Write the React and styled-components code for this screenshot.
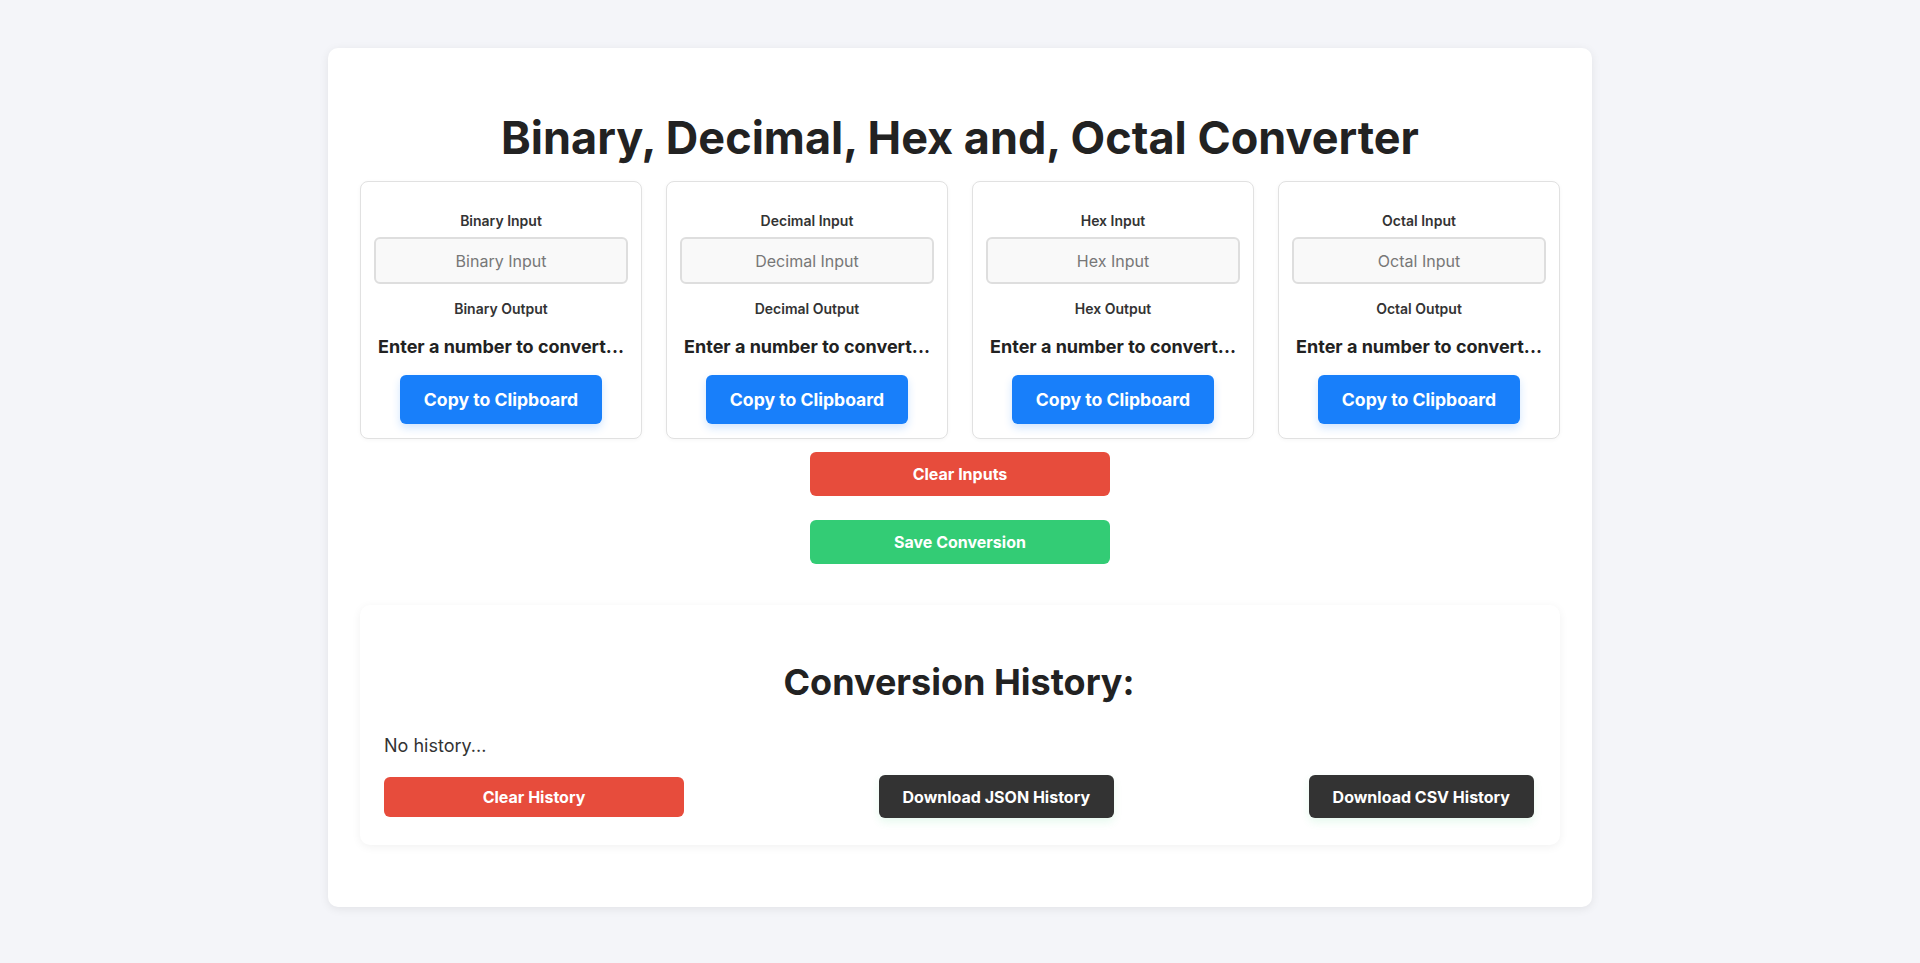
import React, { useState } from "react";
import styled, { createGlobalStyle } from "styled-components";

const GlobalStyle = createGlobalStyle`
    html, body {
        margin: 0;
        padding: 0;
        background: #f4f5f9;
        font-family: Inter, "Noto Sans", sans-serif;
        color: #222;
    }
`;

const BASES = [
    { key: "binary", title: "Binary" },
    { key: "decimal", title: "Decimal" },
    { key: "hex", title: "Hex" },
    { key: "octal", title: "Octal" },
];

const Page = styled.div`
    padding: 48px 0 57px;
`;

const Main = styled.div`
    width: 1264px;
    margin: 0 auto;
    box-sizing: border-box;
    background: #fff;
    border-radius: 10px;
    box-shadow: 0 2px 10px rgba(0, 0, 0, 0.08);
    padding: 63px 32px 62px;
`;

const Title = styled.h1`
    margin: 0 0 17px;
    text-align: center;
    font-size: 45px;
    line-height: 53px;
    font-weight: 700;
    color: #222;
`;

const Grid = styled.div`
    display: grid;
    grid-template-columns: repeat(4, 1fr);
    gap: 24px;
`;

const Card = styled.div`
    display: flex;
    flex-direction: column;
    align-items: center;
    background: #fff;
    border: 1px solid #e1e1e1;
    border-radius: 8px;
    box-shadow: 0 1px 4px rgba(0, 0, 0, 0.04);
    padding: 30px 13px 14px;
    min-width: 0;
`;

const Label = styled.label`
    font-size: 14px;
    line-height: 17px;
    font-weight: 600;
    color: #333;
    margin-top: ${(p) => (p.$spaced ? "16px" : "0")};
`;

const Input = styled.input`
    box-sizing: border-box;
    width: 100%;
    height: 47px;
    margin-top: 8px;
    border: 2px solid #dedede;
    border-radius: 6px;
    background: #f9f9f9;
    font-family: Inter, "Noto Sans", sans-serif;
    font-size: 16px;
    text-align: center;
    color: #333;
    outline: none;

    &::placeholder {
        color: #777;
    }
`;

const Output = styled.div`
    width: 100%;
    margin-top: 19px;
    font-size: 18px;
    line-height: 22px;
    font-weight: 700;
    color: #222;
    text-align: center;
    white-space: nowrap;
    overflow: hidden;
    text-overflow: ellipsis;
`;

const CopyButton = styled.button`
    margin-top: 17px;
    height: 49px;
    padding: 0 24px;
    border: none;
    border-radius: 6px;
    background: #187ffa;
    color: #fff;
    font-family: Inter, "Noto Sans", sans-serif;
    font-size: 17.6px;
    font-weight: 700;
    box-shadow: 0 4px 8px rgba(24, 127, 250, 0.2);
    cursor: pointer;
`;

const Actions = styled.div`
    display: flex;
    flex-direction: column;
    align-items: center;
    gap: 24px;
    margin-top: 13px;
`;

const WideButton = styled.button`
    width: 300px;
    height: 44px;
    border: none;
    border-radius: 6px;
    background: ${(p) => p.$color};
    color: #fff;
    font-family: Inter, "Noto Sans", sans-serif;
    font-size: 16px;
    font-weight: 700;
    cursor: pointer;
`;

const History = styled.div`
    margin-top: 41px;
    background: #fff;
    border-radius: 10px;
    box-shadow: 0 2px 10px rgba(0, 0, 0, 0.06);
    padding: 55px 26px 27px 24px;
`;

const HistoryTitle = styled.h2`
    margin: 0;
    text-align: center;
    font-size: 36px;
    line-height: 44px;
    font-weight: 700;
    color: #222;
`;

const Empty = styled.p`
    margin: 31px 0 18px;
    font-size: 18px;
    line-height: 22px;
    color: #333;
`;

const HistoryBar = styled.div`
    display: flex;
    align-items: center;
    justify-content: space-between;
`;

const ClearHistory = styled.button`
    width: 300px;
    height: 40px;
    border: none;
    border-radius: 6px;
    background: #e74c3c;
    color: #fff;
    font-family: Inter, "Noto Sans", sans-serif;
    font-size: 16px;
    font-weight: 700;
    cursor: pointer;
`;

const DarkButton = styled.button`
    height: 43px;
    padding: 0 24px;
    border: none;
    border-radius: 6px;
    background: #333;
    color: #fff;
    font-family: Inter, "Noto Sans", sans-serif;
    font-size: 16px;
    font-weight: 700;
    box-shadow: 0 4px 8px rgba(46, 204, 113, 0.12);
    cursor: pointer;
`;

const Converter = ({ title, value, onChange }) => (
    <Card>
        <Label>{title} Input</Label>
        <Input
            placeholder={`${title} Input`}
            value={value}
            onChange={(e) => onChange(e.target.value)}
        />
        <Label $spaced>{title} Output</Label>
        <Output>Enter a number to convert...</Output>
        <CopyButton>Copy to Clipboard</CopyButton>
    </Card>
);

const App = () => {
    const [values, setValues] = useState({});

    return (
        <>
            <GlobalStyle />
            <Page>
                <Main>
                    <Title>Binary, Decimal, Hex and, Octal Converter</Title>
                    <Grid>
                        {BASES.map((base) => (
                            <Converter
                                key={base.key}
                                title={base.title}
                                value={values[base.key] || ""}
                                onChange={(v) =>
                                    setValues((prev) => ({ ...prev, [base.key]: v }))
                                }
                            />
                        ))}
                    </Grid>
                    <Actions>
                        <WideButton $color="#e74c3c" onClick={() => setValues({})}>
                            Clear Inputs
                        </WideButton>
                        <WideButton $color="#33cc75">Save Conversion</WideButton>
                    </Actions>
                    <History>
                        <HistoryTitle>Conversion History:</HistoryTitle>
                        <Empty>No history...</Empty>
                        <HistoryBar>
                            <ClearHistory>Clear History</ClearHistory>
                            <DarkButton>Download JSON History</DarkButton>
                            <DarkButton>Download CSV History</DarkButton>
                        </HistoryBar>
                    </History>
                </Main>
            </Page>
        </>
    );
};

export default App;
